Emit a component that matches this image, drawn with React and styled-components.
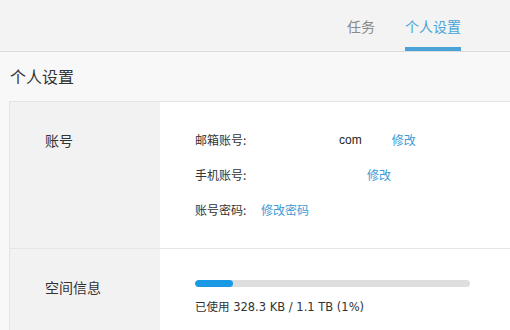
import React from "react";
import styled, { createGlobalStyle } from "styled-components";

const Global = createGlobalStyle`
  html, body { margin: 0; padding: 0; }
  body {
    background: #f8f8f8;
    font-family: "Noto Sans CJK SC", "Liberation Sans", sans-serif;
    color: #333;
    overflow: hidden;
  }
`;

const Header = styled.header`
  height: 51px;
  background: #f3f3f3;
  border-bottom: 1px solid #dcdcdc;
  display: flex;
  justify-content: flex-end;
  padding-right: 49px;
  gap: 30px;
`;

const Tab = styled.div`
  box-sizing: border-box;
  height: 51px;
  padding-top: 16px;
  font-size: 14px;
  line-height: 20px;
  color: ${(p) => (p.$active ? "#4aa3d6" : "#8a8a8a")};
  border-bottom: 4px solid ${(p) => (p.$active ? "#4aa3d6" : "transparent")};
`;

const Title = styled.h1`
  margin: 0;
  padding: 12px 10px 13px;
  font-size: 16px;
  line-height: 24px;
  font-weight: normal;
  color: #333;
`;

const Card = styled.div`
  margin-left: 9px;
  border-top: 1px solid #e4e4e4;
  border-left: 1px solid #e4e4e4;
  background: #fff;
`;

const Section = styled.div`
  display: grid;
  grid-template-columns: 150px 1fr;
  & + & {
    border-top: 1px solid #e6e6e6;
  }
`;

const SideLabel = styled.div`
  background: #f2f2f2;
  padding: 28px 0 28px 35px;
  font-size: 14px;
  line-height: 20px;
  color: #333;
`;

const Body = styled.div`
  padding: ${(p) => p.$pad || "28px 0 28px 35px"};
  display: flex;
  flex-direction: column;
  gap: ${(p) => p.$gap || "15px"};
`;

const Row = styled.div`
  display: flex;
  align-items: center;
  font-size: 12px;
  line-height: 20px;
  height: 20px;
`;

const Label = styled.span`
  width: 66px;
  color: #333;
`;

const Masked = styled.span`
  display: inline-block;
  width: ${(p) => p.$w}px;
  height: 20px;
  background: #fff;
`;

const Value = styled.span`
  display: flex;
  align-items: center;
  font-family: "Liberation Sans", "Noto Sans CJK SC", sans-serif;
  font-size: 12px;
  color: #222;
  margin-right: ${(p) => p.$gap}px;
`;

const Link = styled.a`
  color: #3c9ad6;
  text-decoration: none;
  cursor: pointer;
`;

const Track = styled.div`
  width: 275px;
  height: 7px;
  border-radius: 4px;
  background: #dedede;
  overflow: hidden;
`;

const Fill = styled.div`
  height: 100%;
  border-radius: 4px;
  background: #1a99e4;
`;

const Usage = styled.div`
  font-family: "DejaVu Sans", "Noto Sans CJK SC", sans-serif;
  font-size: 11.5px;
  line-height: 20px;
  color: #333;
`;

export default function App() {
  return (
    <>
      <Global />
      <Header>
        <Tab>任务</Tab>
        <Tab $active>个人设置</Tab>
      </Header>
      <Title>个人设置</Title>
      <Card>
        <Section>
          <SideLabel>账号</SideLabel>
          <Body>
            <Row>
              <Label>邮箱账号:</Label>
              <Value $gap={30}>
                <Masked $w={78} />
                com
              </Value>
              <Link>修改</Link>
            </Row>
            <Row>
              <Label>手机账号:</Label>
              <Value $gap={30}>
                <Masked $w={76} />
              </Value>
              <Link>修改</Link>
            </Row>
            <Row>
              <Label>账号密码:</Label>
              <Link>修改密码</Link>
            </Row>
          </Body>
        </Section>
        <Section>
          <SideLabel>空间信息</SideLabel>
          <Body $pad="31px 0 20px 35px" $gap="10px">
            <Track>
              <Fill style={{ width: "38px" }} />
            </Track>
            <Usage>已使用 328.3 KB / 1.1 TB (1%)</Usage>
          </Body>
        </Section>
      </Card>
    </>
  );
}
